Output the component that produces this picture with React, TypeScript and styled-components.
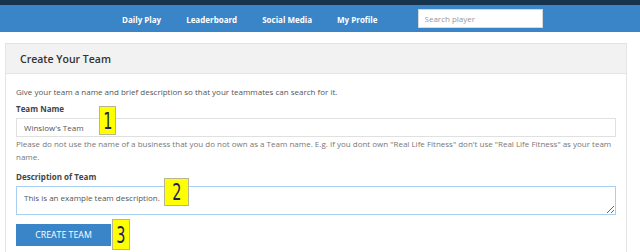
import React from 'react';
import styled, {createGlobalStyle} from 'styled-components';

const GlobalStyle = createGlobalStyle`
  html, body {
    margin: 0;
    padding: 0;
    background: #fff;
  }
  body {
    font-family: "Open Sans", "Noto Sans", sans-serif;
    color: #555;
  }
`;

const Page = styled.div`
  position: relative;
  width: 640px;
  height: 252px;
  overflow: hidden;
`;

const TopStrip = styled.div`
  height: 5px;
  background: #17344f;
`;

const NavBar = styled.nav`
  height: 27px;
  background: #3a84c8;
  display: flex;
  align-items: center;
  padding-left: 122px;
`;

const NavLink = styled.a`
  color: #fff;
  font-size: 8px;
  font-weight: 700;
  text-decoration: none;
  margin-right: 25px;
  padding-top: 1px;
`;

const SearchInput = styled.input`
  margin-left: 15px;
  width: 125px;
  height: 19px;
  box-sizing: border-box;
  border: 1px solid #d8d8d8;
  padding: 0 6px;
  font-family: "Open Sans", sans-serif;
  font-size: 8px;
  color: #555;
  outline: none;
  &::placeholder {
    color: #999;
  }
`;

const Panel = styled.section`
  margin: 11px 13px 0 5px;
  border: 1px solid #e4e4e4;
  border-bottom: none;
`;

const PanelHeader = styled.header`
  height: 29px;
  background: #f2f2f2;
  border-bottom: 1px solid #e4e4e4;
  display: flex;
  align-items: center;
  padding-left: 14px;
  font-size: 10.5px;
  font-weight: 600;
  color: #333;
`;

const PanelBody = styled.div`
  padding: 11px 10px 8px 10px;
  font-size: 8px;
  line-height: 13px;
`;

const Intro = styled.p`
  margin: 0 0 4px 0;
  color: #555;
`;

const Label = styled.label`
  display: block;
  font-weight: 700;
  color: #444;
  margin-bottom: 3px;
  margin-top: ${p => (p.$spaced ? '7px' : '0')};
`;

const TextInput = styled.input`
  display: block;
  width: 100%;
  height: 19px;
  box-sizing: border-box;
  border: 1px solid #e0e0e0;
  padding: 0 7px;
  font-family: "Open Sans", sans-serif;
  font-size: 8px;
  color: #555;
  outline: none;
`;

const HelpText = styled.p`
  margin: 0;
  color: #777;
`;

const TextArea = styled.textarea`
  display: block;
  width: 100%;
  height: 29px;
  box-sizing: border-box;
  border: 1px solid #a9cff0;
  padding: 4px 7px;
  font-family: "Open Sans", sans-serif;
  font-size: 8px;
  line-height: 13px;
  color: #555;
  outline: none;
  resize: vertical;
`;

const SubmitButton = styled.button`
  margin-top: 9px;
  width: 95px;
  height: 22px;
  border: none;
  background: #3a84c8;
  color: #fff;
  font-family: "Open Sans", sans-serif;
  font-size: 8.8px;
  text-transform: uppercase;
  padding: 0;
`;

const Badge = styled.div`
  position: absolute;
  left: ${p => p.$x}px;
  top: ${p => p.$y}px;
  width: ${p => p.$w}px;
  height: ${p => p.$h}px;
  box-sizing: border-box;
  background: #ffff00;
  border: 1px solid #b8b890;
  display: flex;
  align-items: center;
  justify-content: center;
`;

const BadgeNumber = styled.span`
  display: inline-block;
  font-family: "DejaVu Sans", sans-serif;
  font-size: 18px;
  line-height: 1;
  color: #1b1f5c;
  transform: scale(0.8, 1.3);
`;

const badges = [
  {n: '1', x: 99, y: 106, w: 17, h: 29},
  {n: '2', x: 164, y: 178, w: 25, h: 28},
  {n: '3', x: 112, y: 219, w: 18, h: 31},
];

export default function App() {
  return (
    <Page>
      <GlobalStyle />
      <TopStrip />
      <NavBar>
        <NavLink href="#">Daily Play</NavLink>
        <NavLink href="#">Leaderboard</NavLink>
        <NavLink href="#">Social Media</NavLink>
        <NavLink href="#">My Profile</NavLink>
        <SearchInput placeholder="Search player" />
      </NavBar>

      <Panel>
        <PanelHeader>Create Your Team</PanelHeader>
        <PanelBody>
          <Intro>Give your team a name and brief description so that your teammates can search for it.</Intro>
          <Label>Team Name</Label>
          <TextInput defaultValue="Winslow's Team" />
          <HelpText>
            Please do not use the name of a business that you do not own as a Team name. E.g. If you dont own "Real
            Life Fitness" don't use "Real Life Fitness" as your team name.
          </HelpText>
          <Label $spaced>Description of Team</Label>
          <TextArea defaultValue="This is an example team description." />
          <SubmitButton>Create Team</SubmitButton>
        </PanelBody>
      </Panel>

      {badges.map(b => (
        <Badge key={b.n} $x={b.x} $y={b.y} $w={b.w} $h={b.h}>
          <BadgeNumber>{b.n}</BadgeNumber>
        </Badge>
      ))}
    </Page>
  );
}
